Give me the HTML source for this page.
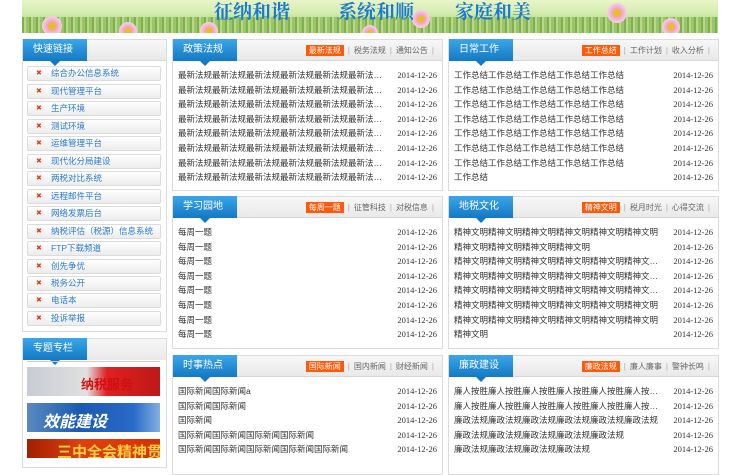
<!DOCTYPE html>
<html><head><meta charset="utf-8"><style>
*{margin:0;padding:0;box-sizing:border-box}
body{width:750px;height:458px;overflow:hidden;background:#fff;font-family:"Liberation Sans","Noto Sans CJK SC",sans-serif;position:relative}
.banner{position:absolute;left:22px;top:0;width:696px;height:33px;background:linear-gradient(180deg,#e8f5c8 0%,#d4ecb0 40%,#a8cf78 75%,#86b85a 100%);overflow:hidden}
.banner .g{position:absolute;left:0;bottom:0;width:100%;height:16px;background:repeating-linear-gradient(90deg,#7fb04e 0 2px,#b8d98c 2px 4px,#9cc46a 4px 7px)}
.banner .f{position:absolute;border-radius:50%;background:radial-gradient(circle,#e8c020 0 25%,#f0a0c8 30%,#f8d0e4 70%,transparent 72%)}
.banner .t{position:absolute;top:-3px;font-size:19px;font-weight:bold;color:#1a7ad0;font-family:"Noto Serif CJK SC",serif}
.box{position:absolute;border:1px solid #dcdcdc;background:#fff}
.hd{height:21px;background:linear-gradient(#f7f7f7,#e9e9e9);border-bottom:1px solid #d6d6d6;position:relative}
.tab{position:absolute;left:0;top:-1px;width:64px;height:22px;background:linear-gradient(#3aa6e8,#1479c4);color:#fff;font-size:10px;line-height:22px;padding-left:10px}
.tab:after{content:"";position:absolute;left:27px;bottom:-5px;border:5px solid transparent;border-top-color:#1479c4;border-bottom:0}
.tabs{position:absolute;right:4px;top:5px;font-size:8px;color:#666;white-space:nowrap}
.tabs b{font-weight:normal;background:#ff5a0a;color:#fff;padding:1px 3px}
.tabs i{font-style:normal;color:#aaa;margin:0 4px}
.rows{position:absolute;left:5px;right:5px;top:28px;font-size:8.5px;color:#333}
.r{height:14.6px;line-height:14.6px;position:relative;white-space:nowrap;overflow:hidden}
.r em{font-style:normal;display:inline-block;max-width:206px;overflow:hidden;text-overflow:ellipsis;vertical-align:top}
.r span{position:absolute;right:0;top:0;font-family:"Liberation Serif",serif;font-size:8.5px;background:#fff;padding-left:4px}
.lk{position:absolute;left:27px;width:134px;height:15px;border:1px solid #dcdcdc;border-radius:2px;background:linear-gradient(#fff,#ececec);font-size:8.5px;color:#2a7ad0;line-height:13px;padding-left:23px}
.lk:before{content:"✖";position:absolute;left:8px;top:0;color:#e53a1a;font-size:7px}
.img{position:absolute;left:27px;width:133px;overflow:hidden;white-space:nowrap}
</style></head><body>
<div class="banner">
<div class="g"></div>
<div class="f" style="left:20px;top:16px;width:20px;height:20px"></div>
<div class="f" style="left:97px;top:22px;width:18px;height:18px"></div>
<div class="f" style="left:178px;top:22px;width:18px;height:18px"></div>
<div class="f" style="left:340px;top:25px;width:16px;height:16px"></div>
<div class="f" style="left:390px;top:10px;width:18px;height:18px"></div>
<div class="f" style="left:585px;top:3px;width:20px;height:20px"></div>
<div class="f" style="left:640px;top:18px;width:18px;height:18px"></div>
<div class="t" style="left:192px">征纳和谐</div>
<div class="t" style="left:316px">系统和顺</div>
<div class="t" style="left:433px">家庭和美</div>
</div>

<div class="box" style="left:22px;top:39px;width:145px;height:293px">
<div class="hd"><div class="tab">快速链接</div></div>
</div>
<div class="lk" style="top:66px">综合办公信息系统</div>
<div class="lk" style="top:84px">现代管理平台</div>
<div class="lk" style="top:101px">生产环境</div>
<div class="lk" style="top:119px">测试环境</div>
<div class="lk" style="top:136px">运维管理平台</div>
<div class="lk" style="top:154px">现代化分局建设</div>
<div class="lk" style="top:171px">两税对比系统</div>
<div class="lk" style="top:189px">远程邮件平台</div>
<div class="lk" style="top:206px">网络发票后台</div>
<div class="lk" style="top:224px">纳税评估（税源）信息系统</div>
<div class="lk" style="top:241px">FTP下载频道</div>
<div class="lk" style="top:259px">创先争优</div>
<div class="lk" style="top:276px">税务公开</div>
<div class="lk" style="top:293px">电话本</div>
<div class="lk" style="top:311px">投诉举报</div>

<div class="box" style="left:22px;top:338px;width:145px;height:130px">
<div class="hd" style="border-bottom:0"><div class="tab">专题专栏</div></div>
</div>
<div style="position:absolute;left:27px;top:361px;width:133px;height:1px;background:#f0c0c0"></div>
<div class="img" style="top:367px;height:29px;background:linear-gradient(90deg,#c8ccd4 0,#e0e0e0 45%,#e02020 60%,#c01818 100%)"><span style="position:absolute;left:54px;top:7px;font-size:13px;font-weight:bold;color:#d01010">纳税服务</span></div>
<div class="img" style="top:403px;height:29px;background:linear-gradient(90deg,#5a8ac0,#1a5ab0 40%,#2a6ac8 80%,#80b0e0)"><span style="position:absolute;left:16px;top:5px;font-size:16px;font-weight:bold;font-style:italic;color:#fff">效能建设</span></div>
<div class="img" style="top:439px;height:19px;background:linear-gradient(90deg,#a02000,#e04010 40%,#d83000)"><span style="position:absolute;left:30px;top:2px;font-size:15px;font-weight:bold;color:#f8d040">三中全会精神贯彻</span></div>

<div class="box" style="left:172px;top:39px;width:271px;height:152px">
<div class="hd"><div class="tab">政策法规</div><div class="tabs"><b>最新法规</b><i>|</i>税务法规<i>|</i>通知公告<i>|</i></div></div>
<div class="rows">
<div class="r"><em>最新法规最新法规最新法规最新法规最新法规最新法规最新法规</em><span>2014-12-26</span></div>
<div class="r"><em>最新法规最新法规最新法规最新法规最新法规最新法规最新法规</em><span>2014-12-26</span></div>
<div class="r"><em>最新法规最新法规最新法规最新法规最新法规最新法规最新法规</em><span>2014-12-26</span></div>
<div class="r"><em>最新法规最新法规最新法规最新法规最新法规最新法规最新法规</em><span>2014-12-26</span></div>
<div class="r"><em>最新法规最新法规最新法规最新法规最新法规最新法规最新法规</em><span>2014-12-26</span></div>
<div class="r"><em>最新法规最新法规最新法规最新法规最新法规最新法规最新法规</em><span>2014-12-26</span></div>
<div class="r"><em>最新法规最新法规最新法规最新法规最新法规最新法规最新法规</em><span>2014-12-26</span></div>
<div class="r"><em>最新法规最新法规最新法规最新法规最新法规最新法规最新法规</em><span>2014-12-26</span></div>
</div></div>

<div class="box" style="left:172px;top:196px;width:271px;height:153px">
<div class="hd"><div class="tab">学习园地</div><div class="tabs"><b>每周一题</b><i>|</i>征管科技<i>|</i>对税信息<i>|</i></div></div>
<div class="rows">
<div class="r">每周一题<span>2014-12-26</span></div>
<div class="r">每周一题<span>2014-12-26</span></div>
<div class="r">每周一题<span>2014-12-26</span></div>
<div class="r">每周一题<span>2014-12-26</span></div>
<div class="r">每周一题<span>2014-12-26</span></div>
<div class="r">每周一题<span>2014-12-26</span></div>
<div class="r">每周一题<span>2014-12-26</span></div>
<div class="r">每周一题<span>2014-12-26</span></div>
</div></div>

<div class="box" style="left:172px;top:355px;width:271px;height:120px">
<div class="hd"><div class="tab">时事热点</div><div class="tabs"><b>国际新闻</b><i>|</i>国内新闻<i>|</i>财经新闻<i>|</i></div></div>
<div class="rows">
<div class="r">国际新闻国际新闻a<span>2014-12-26</span></div>
<div class="r">国际新闻国际新闻<span>2014-12-26</span></div>
<div class="r">国际新闻<span>2014-12-26</span></div>
<div class="r">国际新闻国际新闻国际新闻国际新闻<span>2014-12-26</span></div>
<div class="r">国际新闻国际新闻国际新闻国际新闻国际新闻<span>2014-12-26</span></div>
</div></div>

<div class="box" style="left:448px;top:39px;width:271px;height:152px">
<div class="hd"><div class="tab">日常工作</div><div class="tabs"><b>工作总结</b><i>|</i>工作计划<i>|</i>收入分析<i>|</i></div></div>
<div class="rows">
<div class="r">工作总结工作总结工作总结工作总结工作总结<span>2014-12-26</span></div>
<div class="r">工作总结工作总结工作总结工作总结工作总结<span>2014-12-26</span></div>
<div class="r">工作总结工作总结工作总结工作总结工作总结<span>2014-12-26</span></div>
<div class="r">工作总结工作总结工作总结工作总结工作总结<span>2014-12-26</span></div>
<div class="r">工作总结工作总结工作总结工作总结工作总结<span>2014-12-26</span></div>
<div class="r">工作总结工作总结工作总结工作总结工作总结<span>2014-12-26</span></div>
<div class="r">工作总结工作总结工作总结工作总结工作总结<span>2014-12-26</span></div>
<div class="r">工作总结<span>2014-12-26</span></div>
</div></div>

<div class="box" style="left:448px;top:196px;width:271px;height:153px">
<div class="hd"><div class="tab">地税文化</div><div class="tabs"><b>精神文明</b><i>|</i>税月时光<i>|</i>心得交流<i>|</i></div></div>
<div class="rows">
<div class="r"><em>精神文明精神文明精神文明精神文明精神文明精神文明</em><span>2014-12-26</span></div>
<div class="r"><em>精神文明精神文明精神文明精神文明</em><span>2014-12-26</span></div>
<div class="r"><em>精神文明精神文明精神文明精神文明精神文明精神文明精神文明</em><span>2014-12-26</span></div>
<div class="r"><em>精神文明精神文明精神文明精神文明精神文明精神文明精神文明</em><span>2014-12-26</span></div>
<div class="r"><em>精神文明精神文明精神文明精神文明精神文明精神文明精神文明</em><span>2014-12-26</span></div>
<div class="r"><em>精神文明精神文明精神文明精神文明精神文明精神文明</em><span>2014-12-26</span></div>
<div class="r"><em>精神文明精神文明精神文明精神文明精神文明精神文明</em><span>2014-12-26</span></div>
<div class="r">精神文明<span>2014-12-26</span></div>
</div></div>

<div class="box" style="left:448px;top:355px;width:271px;height:120px">
<div class="hd"><div class="tab">廉政建设</div><div class="tabs"><b>廉政法规</b><i>|</i>廉人廉事<i>|</i>警钟长鸣<i>|</i></div></div>
<div class="rows">
<div class="r"><em>廉人按胜廉人按胜廉人按胜廉人按胜廉人按胜廉人按胜廉人按胜</em><span>2014-12-26</span></div>
<div class="r"><em>廉人按胜廉人按胜廉人按胜廉人按胜廉人按胜廉人按胜廉人按胜</em><span>2014-12-26</span></div>
<div class="r"><em>廉政法规廉政法规廉政法规廉政法规廉政法规廉政法规</em><span>2014-12-26</span></div>
<div class="r"><em>廉政法规廉政法规廉政法规廉政法规廉政法规</em><span>2014-12-26</span></div>
<div class="r"><em>廉政法规廉政法规廉政法规廉政法规</em><span>2014-12-26</span></div>
</div></div>
</body></html>
